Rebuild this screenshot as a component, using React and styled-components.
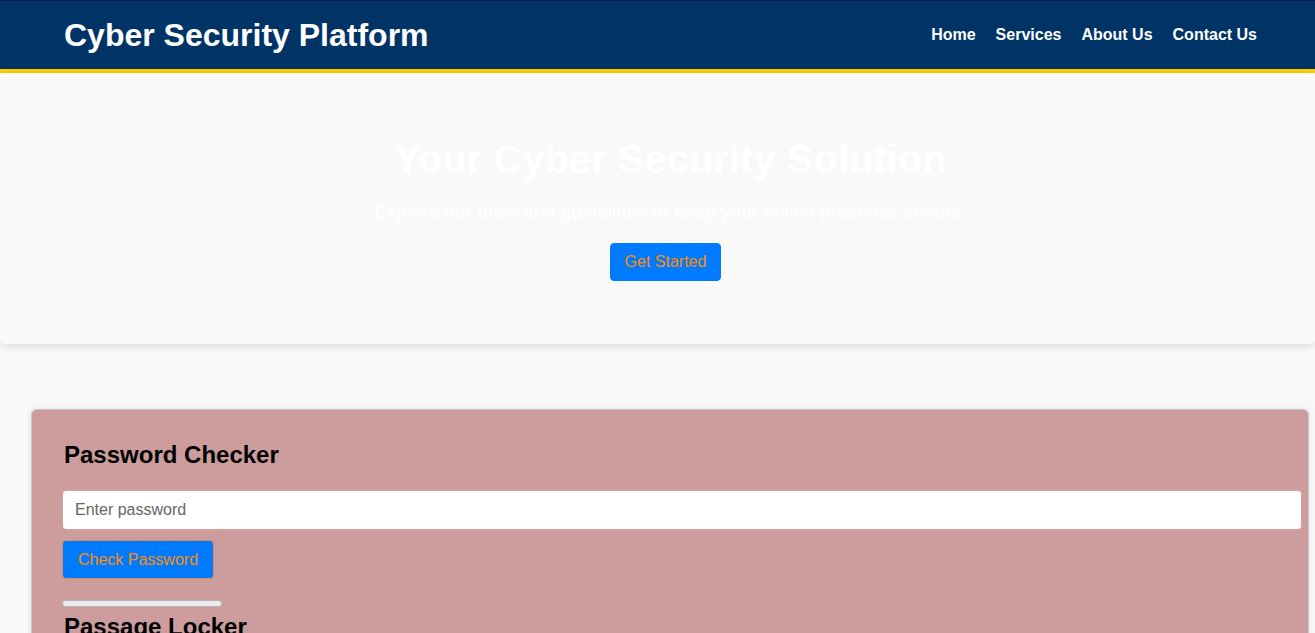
import styled, { createGlobalStyle } from 'styled-components'

const GlobalStyle = createGlobalStyle`
  body {
    margin: 0;
    font-family: "Liberation Sans", Arial, sans-serif;
    background: #f8f8f8;
  }
`;

const navLinks = ['Home', 'Services', 'About Us', 'Contact Us'];

const App = () => {
  return (
    <>
      <GlobalStyle />
      <Header>
        <h1>Cyber Security Platform</h1>
        <Nav>
          {navLinks.map((link) => (
            <a key={link} href="#">{link}</a>
          ))}
        </Nav>
      </Header>
      <Hero>
        <h2>Your Cyber Security Solution</h2>
        <p>Explore our tools and guidelines to keep your online presence secure.</p>
        <Button $hero>Get Started</Button>
      </Hero>
      <Main>
        <Card>
          <h2>Password Checker</h2>
          <Input type="password" placeholder="Enter password" />
          <Button $block>Check Password</Button>
          <Strength />
          <h2>Passage Locker</h2>
          <Input type="text" placeholder="Enter passage" />
        </Card>
      </Main>
    </>
  );
};

export default App

const Header = styled.header`
  height: 68px;
  background: #003366;
  border-top: 1px solid #001a4d;
  border-bottom: 4px solid #ffcc00;
  padding: 0 58px 0 64px;
  display: flex;
  align-items: center;
  justify-content: space-between;
  color: #fff;

  h1 {
    margin: 0;
    font-size: 32px;
    font-weight: bold;
  }
`;

const Nav = styled.nav`
  display: flex;
  gap: 20px;

  a {
    color: #fff;
    text-decoration: none;
    font-weight: bold;
    font-size: 16px;
  }
`;

const Hero = styled.section`
  background: #f9f9f9;
  border-radius: 0 0 5px 5px;
  box-shadow: 0 2px 8px rgba(0, 0, 0, 0.12);
  text-align: center;
  padding: 64px 0 63px 26px;
  color: #fff;

  h2 {
    margin: 0 0 19px;
    font-size: 40px;
    font-weight: bold;
  }

  p {
    margin: 0 0 20px;
    font-size: 19.2px;
  }
`;

const Button = styled.button`
  display: ${({ $block }) => ($block ? 'block' : 'inline-block')};
  margin: ${({ $block, $hero }) => ($block ? '10px 0 0' : $hero ? '0 10px 0 0' : '0')};
  background: #007bff;
  color: #ff8c00;
  border: 1px solid ${({ $block }) => ($block ? '#d98c5c' : '#007bff')};
  border-radius: 4px;
  padding: ${({ $block }) => ($block ? '10px 15px 9px' : '9px 14px')};
  font-family: "Liberation Sans", Arial, sans-serif;
  font-size: 16px;
  cursor: pointer;
`;

const Main = styled.main`
  padding: 65px 6px 0 31px;
`;

const Card = styled.div`
  background: #cd9d9d;
  border: 1px solid #c8c8c8;
  border-radius: 6px;
  box-shadow: 0 0 6px rgba(0, 0, 0, 0.1);
  padding: 31px 32px 28px 30px;

  h2 {
    margin: 0 0 21px 2px;
    font-size: 24px;
    font-weight: bold;
    color: #000;
  }
`;

const Input = styled.input`
  display: block;
  width: 100%;
  box-sizing: content-box;
  padding: 10px 12px;
  border: 1px solid #d8a0a0;
  border-radius: 4px;
  background: #fff;
  font-family: "Liberation Sans", Arial, sans-serif;
  font-size: 16px;
  color: #333;
  outline: none;

  &::placeholder {
    color: #666;
  }
`;

const Strength = styled.div`
  width: 158px;
  height: 5px;
  margin: 21px 0 6px;
  background: #ececec;
  border: 1px solid #b5b5b5;
  border-radius: 4px;
`;
